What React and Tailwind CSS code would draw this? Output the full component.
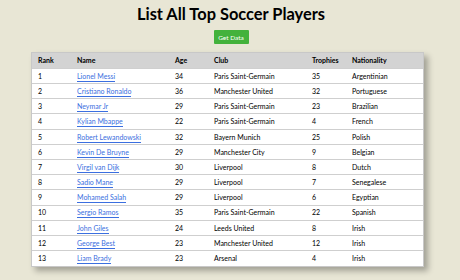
import React from 'react';

const players = [
  { rank: 1, name: 'Lionel Messi', age: 34, club: 'Paris Saint-Germain', trophies: 35, nationality: 'Argentinian' },
  { rank: 2, name: 'Cristiano Ronaldo', age: 36, club: 'Manchester United', trophies: 32, nationality: 'Portuguese' },
  { rank: 3, name: 'Neymar Jr', age: 29, club: 'Paris Saint-Germain', trophies: 23, nationality: 'Brazilian' },
  { rank: 4, name: 'Kylian Mbappe', age: 22, club: 'Paris Saint-Germain', trophies: 4, nationality: 'French' },
  { rank: 5, name: 'Robert Lewandowski', age: 32, club: 'Bayern Munich', trophies: 25, nationality: 'Polish' },
  { rank: 6, name: 'Kevin De Bruyne', age: 29, club: 'Manchester City', trophies: 9, nationality: 'Belgian' },
  { rank: 7, name: 'Virgil van Dijk', age: 30, club: 'Liverpool', trophies: 8, nationality: 'Dutch' },
  { rank: 8, name: 'Sadio Mane', age: 29, club: 'Liverpool', trophies: 7, nationality: 'Senegalese' },
  { rank: 9, name: 'Mohamed Salah', age: 29, club: 'Liverpool', trophies: 6, nationality: 'Egyptian' },
  { rank: 10, name: 'Sergio Ramos', age: 35, club: 'Paris Saint-Germain', trophies: 22, nationality: 'Spanish' },
  { rank: 11, name: 'John Giles', age: 24, club: 'Leeds United', trophies: 8, nationality: 'Irish' },
  { rank: 12, name: 'George Best', age: 23, club: 'Manchester United', trophies: 12, nationality: 'Irish' },
  { rank: 13, name: 'Liam Brady', age: 23, club: 'Arsenal', trophies: 4, nationality: 'Irish' },
];

const App = () => {
  return (
    <div className="w-[460px] h-[280px] bg-[#e8e6d5] text-black flex flex-col items-center overflow-hidden" style={{ fontFamily: 'Lato, sans-serif' }}>
      <h1 className="text-[16.4px] font-bold leading-none mt-[6px] ml-[2px]">List All Top Soccer Players</h1>
      <button className="mt-[8px] h-[14px] w-[35px] ml-[2px] bg-[#43b23c] text-white text-[6.5px] rounded-[1px]">Get Data</button>
      <div className="mt-[8px] self-start ml-[31px] w-[393px] bg-white shadow-[4px_4px_6px_rgba(0,0,0,0.3)] border border-[#c8c8c8]">
        <table className="w-full border-collapse text-[7px]">
          <thead>
            <tr className="bg-[#d3d3d3] h-[15px] font-bold text-left">
              <th className="pl-[6px] w-[45px]">Rank</th>
              <th className="w-[98px]">Name</th>
              <th className="w-[39px]">Age</th>
              <th className="w-[98px]">Club</th>
              <th className="w-[40px]">Trophies</th>
              <th>Nationality</th>
            </tr>
          </thead>
          <tbody>
            {players.map((p) => (
              <tr key={p.rank} className="h-[15.2px] border-t border-[#cfcfcf]">
                <td className="pl-[6px]">{p.rank}</td>
                <td>
                  <a href="#" className="text-[#3b6fe0] border-b border-[#3b6fe0] pb-[1px]">{p.name}</a>
                </td>
                <td>{p.age}</td>
                <td>{p.club}</td>
                <td>{p.trophies}</td>
                <td>{p.nationality}</td>
              </tr>
            ))}
          </tbody>
        </table>
      </div>
    </div>
  );
};

export default App;
